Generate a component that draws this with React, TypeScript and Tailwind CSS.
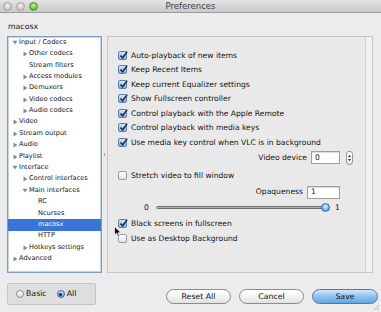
type Arrow = "down" | "right" | undefined;

type TreeItem = {
  label: string;
  level: 0 | 1 | 2;
  arrow?: Arrow;
  selected?: boolean;
};

const treeItems: TreeItem[] = [
  { label: "Input / Codecs", level: 0, arrow: "down" },
  { label: "Other codecs", level: 1, arrow: "right" },
  { label: "Stream filters", level: 1 },
  { label: "Access modules", level: 1, arrow: "right" },
  { label: "Demuxers", level: 1, arrow: "right" },
  { label: "Video codecs", level: 1, arrow: "right" },
  { label: "Audio codecs", level: 1, arrow: "right" },
  { label: "Video", level: 0, arrow: "right" },
  { label: "Stream output", level: 0, arrow: "right" },
  { label: "Audio", level: 0, arrow: "right" },
  { label: "Playlist", level: 0, arrow: "right" },
  { label: "Interface", level: 0, arrow: "down" },
  { label: "Control interfaces", level: 1, arrow: "right" },
  { label: "Main interfaces", level: 1, arrow: "down" },
  { label: "RC", level: 2 },
  { label: "Ncurses", level: 2 },
  { label: "macosx", level: 2, selected: true },
  { label: "HTTP", level: 2 },
  { label: "Hotkeys settings", level: 1, arrow: "right" },
  { label: "Advanced", level: 0, arrow: "right" },
];

const indent = ["pl-[3px]", "pl-[13px]", "pl-[22px]"];

const Disclosure = ({ arrow, selected }: { arrow: Arrow; selected?: boolean }) => {
  const fill = selected ? "#ffffff" : "#8a8a8a";
  return (
    <span className="flex h-full w-[8px] items-center">
      {arrow === "right" && (
        <svg width="5" height="6" viewBox="0 0 5 6" className="ml-[2px]">
          <path d="M0.5 0.5 L4.5 3 L0.5 5.5 Z" fill={fill} />
        </svg>
      )}
      {arrow === "down" && (
        <svg width="6" height="5" viewBox="0 0 6 5" className="ml-[1px]">
          <path d="M0.5 0.8 L5.5 0.8 L3 4.5 Z" fill={fill} />
        </svg>
      )}
    </span>
  );
};

const TrafficLight = ({ green }: { green?: boolean }) => (
  <span
    className={
      green
        ? "h-[9px] w-[9px] rounded-full border border-[#4f9a35] bg-[radial-gradient(circle_at_50%_35%,#c8f5a8,#63c33e_60%,#3f9a25)]"
        : "h-[9px] w-[9px] rounded-full border border-[#a3a3a3] bg-[radial-gradient(circle_at_50%_35%,#f4f4f4,#cdcdcd_60%,#b0b0b0)]"
    }
  />
);

const CheckBox = ({ checked }: { checked?: boolean }) => (
  <span
    className={
      checked
        ? "relative flex h-[9px] w-[9px] shrink-0 items-center justify-center rounded-[2px] border border-[#5c7fa9] bg-gradient-to-b from-[#d6e6f7] to-[#7fb0e2]"
        : "relative flex h-[9px] w-[9px] shrink-0 items-center justify-center rounded-[2px] border border-[#9a9a9a] bg-gradient-to-b from-[#ffffff] to-[#e2e2e2]"
    }
  >
    {checked && (
      <svg width="9" height="9" viewBox="0 0 9 9" className="absolute -top-[1px] left-0">
        <path d="M1.5 4.5 L3.6 6.8 L8.2 0.6" stroke="#1c2a44" strokeWidth="1.5" fill="none" />
      </svg>
    )}
  </span>
);

const CheckRow = ({ label, checked, h }: { label: string; checked?: boolean; h: string }) => (
  <div className={`flex items-center gap-[4px] pl-[10px] ${h}`}>
    <CheckBox checked={checked} />
    <span>{label}</span>
  </div>
);

const PillButton = ({ label, primary }: { label: string; primary?: boolean }) => (
  <button
    type="button"
    className={
      primary
        ? "h-[15px] w-[66px] rounded-full border border-[#4f79ad] bg-gradient-to-b from-[#d3e8fb] via-[#8ec2f0] to-[#5fa6e6] text-[7.8px] text-[#111]"
        : "h-[15px] w-[65px] rounded-full border border-[#8c8c8c] bg-gradient-to-b from-[#ffffff] via-[#f3f3f3] to-[#e0e0e0] text-[7.8px] text-[#111]"
    }
  >
    {label}
  </button>
);

export default function App() {
  return (
    <div className="relative flex h-[312px] w-[381px] flex-col overflow-hidden bg-[#ececec] font-['DejaVu_Sans',sans-serif] text-[#141414]">
      <div className="relative flex h-[13px] shrink-0 items-center border-b border-[#9c9c9c] bg-gradient-to-b from-[#e4e4e4] to-[#c9c9c9]">
        <div className="absolute left-[3px] top-[2px] flex gap-[4px]">
          <TrafficLight />
          <TrafficLight />
          <TrafficLight green />
        </div>
        <span className="w-full text-center text-[8.5px] leading-none text-[#3e3e3e]">Preferences</span>
      </div>

      <div className="pl-[8px] pt-[9px] text-[7.8px] leading-[10px]">macosx</div>

      <div className="mt-[4px] flex h-[237px] pl-[7px]">
        <div className="w-[95px] shrink-0 border border-[#7f9dc6] bg-white shadow-[0_0_0_1px_#c3d3ea_inset]">
          {treeItems.map((item) => (
            <div
              key={item.label}
              className={`flex h-[11.4px] items-center text-[6.6px] ${indent[item.level]} ${
                item.selected ? "bg-[#3a74d6] text-white" : ""
              }`}
            >
              <Disclosure arrow={item.arrow} selected={item.selected} />
              <span className="whitespace-nowrap">{item.label}</span>
            </div>
          ))}
        </div>

        <div className="flex w-[5px] shrink-0 items-center justify-center">
          <span className="h-[3px] w-[1px] bg-[#a0a0a0]" />
        </div>

        <div className="flex w-[266px] border border-[#c6c6c6] bg-[#e9e9e9]">
          <div className="flex flex-1 flex-col pt-[11px] text-[7.6px]">
            <CheckRow label="Auto-playback of new items" checked h="h-[14.5px]" />
            <CheckRow label="Keep Recent Items" checked h="h-[14.5px]" />
            <CheckRow label="Keep current Equalizer settings" checked h="h-[14.5px]" />
            <CheckRow label="Show Fullscreen controller" checked h="h-[14.5px]" />
            <CheckRow label="Control playback with the Apple Remote" checked h="h-[14.5px]" />
            <CheckRow label="Control playback with media keys" checked h="h-[14.5px]" />
            <CheckRow label="Use media key control when VLC is in background" checked h="h-[14.5px]" />

            <div className="flex h-[16px] items-center justify-end pr-[12px]">
              <span className="mr-[4px]">Video device</span>
              <span className="flex h-[13px] w-[29px] items-center border border-[#9e9e9e] bg-white pl-[3px] shadow-[inset_0_1px_1px_rgba(0,0,0,0.15)]">
                0
              </span>
              <span className="ml-[6px] flex h-[14px] w-[7px] flex-col items-center justify-center gap-[2px] rounded-[3px] border border-[#9a9a9a] bg-gradient-to-b from-white to-[#e2e2e2]">
                <svg width="3" height="2" viewBox="0 0 3 2">
                  <path d="M0 2 L1.5 0 L3 2 Z" fill="#333" />
                </svg>
                <svg width="3" height="2" viewBox="0 0 3 2">
                  <path d="M0 0 L1.5 2 L3 0 Z" fill="#333" />
                </svg>
              </span>
            </div>

            <CheckRow label="Stretch video to fill window" h="h-[19.5px]" />

            <div className="flex h-[14px] items-center justify-end pr-[25px]">
              <span className="mr-[4px]">Opaqueness</span>
              <span className="flex h-[13px] w-[33px] items-center border border-[#9e9e9e] bg-white pl-[3px] shadow-[inset_0_1px_1px_rgba(0,0,0,0.15)]">
                1
              </span>
            </div>

            <div className="flex h-[17px] items-center pl-[36px]">
              <span className="w-[12px]">0</span>
              <div className="relative flex h-[9px] w-[174px] items-center">
                <span className="h-[3px] w-full rounded-full border border-[#6d6d6d] bg-gradient-to-b from-[#9a9a9a] to-[#cfcfcf]" />
                <span className="absolute right-0 top-0 h-[9px] w-[9px] rounded-full border border-[#3e6aa3] bg-[radial-gradient(circle_at_50%_35%,#e2f0fd,#74afe9_60%,#3c7fcf)]" />
              </div>
              <span className="ml-[5px]">1</span>
            </div>

            <CheckRow label="Black screens in fullscreen" checked h="h-[15px]" />
            <CheckRow label="Use as Desktop Background" h="h-[14.5px]" />
          </div>
          <div className="w-[7px] border-l border-[#d4d4d4] bg-[#f1f1f1]" />
        </div>
      </div>

      <div className="flex items-start pl-[7px] pt-[10px]">
        <div className="flex h-[22px] w-[89px] items-center rounded-[2px] border border-[#c4c4c4] bg-[#dedede] pl-[8px] text-[7.8px]">
          <span className="h-[8px] w-[8px] rounded-full border border-[#8f8f8f] bg-gradient-to-b from-white to-[#dcdcdc]" />
          <span className="ml-[2px]">Basic</span>
          <span className="ml-[10px] flex h-[8px] w-[8px] items-center justify-center rounded-full border border-[#3e6aa3] bg-gradient-to-b from-[#cfe4f9] to-[#5d9ee0]">
            <span className="h-[3px] w-[3px] rounded-full bg-[#1b2b45]" />
          </span>
          <span className="ml-[2px]">All</span>
        </div>
        <div className="ml-[70px] mt-[6px] flex gap-[8px]">
          <PillButton label="Reset All" />
          <PillButton label="Cancel" />
          <PillButton label="Save" primary />
        </div>
      </div>

      <svg width="6" height="6" viewBox="0 0 6 6" className="absolute bottom-[2px] right-[2px]">
        <path d="M6 1 L1 6 M6 4 L4 6" stroke="#a8a8a8" strokeWidth="0.8" />
      </svg>

      <svg width="8" height="12" viewBox="0 0 8 12" className="absolute left-[114px] top-[226px]">
        <path d="M0.5 0.5 L0.5 9 L2.6 7.2 L4 10.8 L5.4 10.2 L4 6.8 L7 6.8 Z" fill="#111" stroke="#fff" strokeWidth="0.7" />
      </svg>
    </div>
  );
}
